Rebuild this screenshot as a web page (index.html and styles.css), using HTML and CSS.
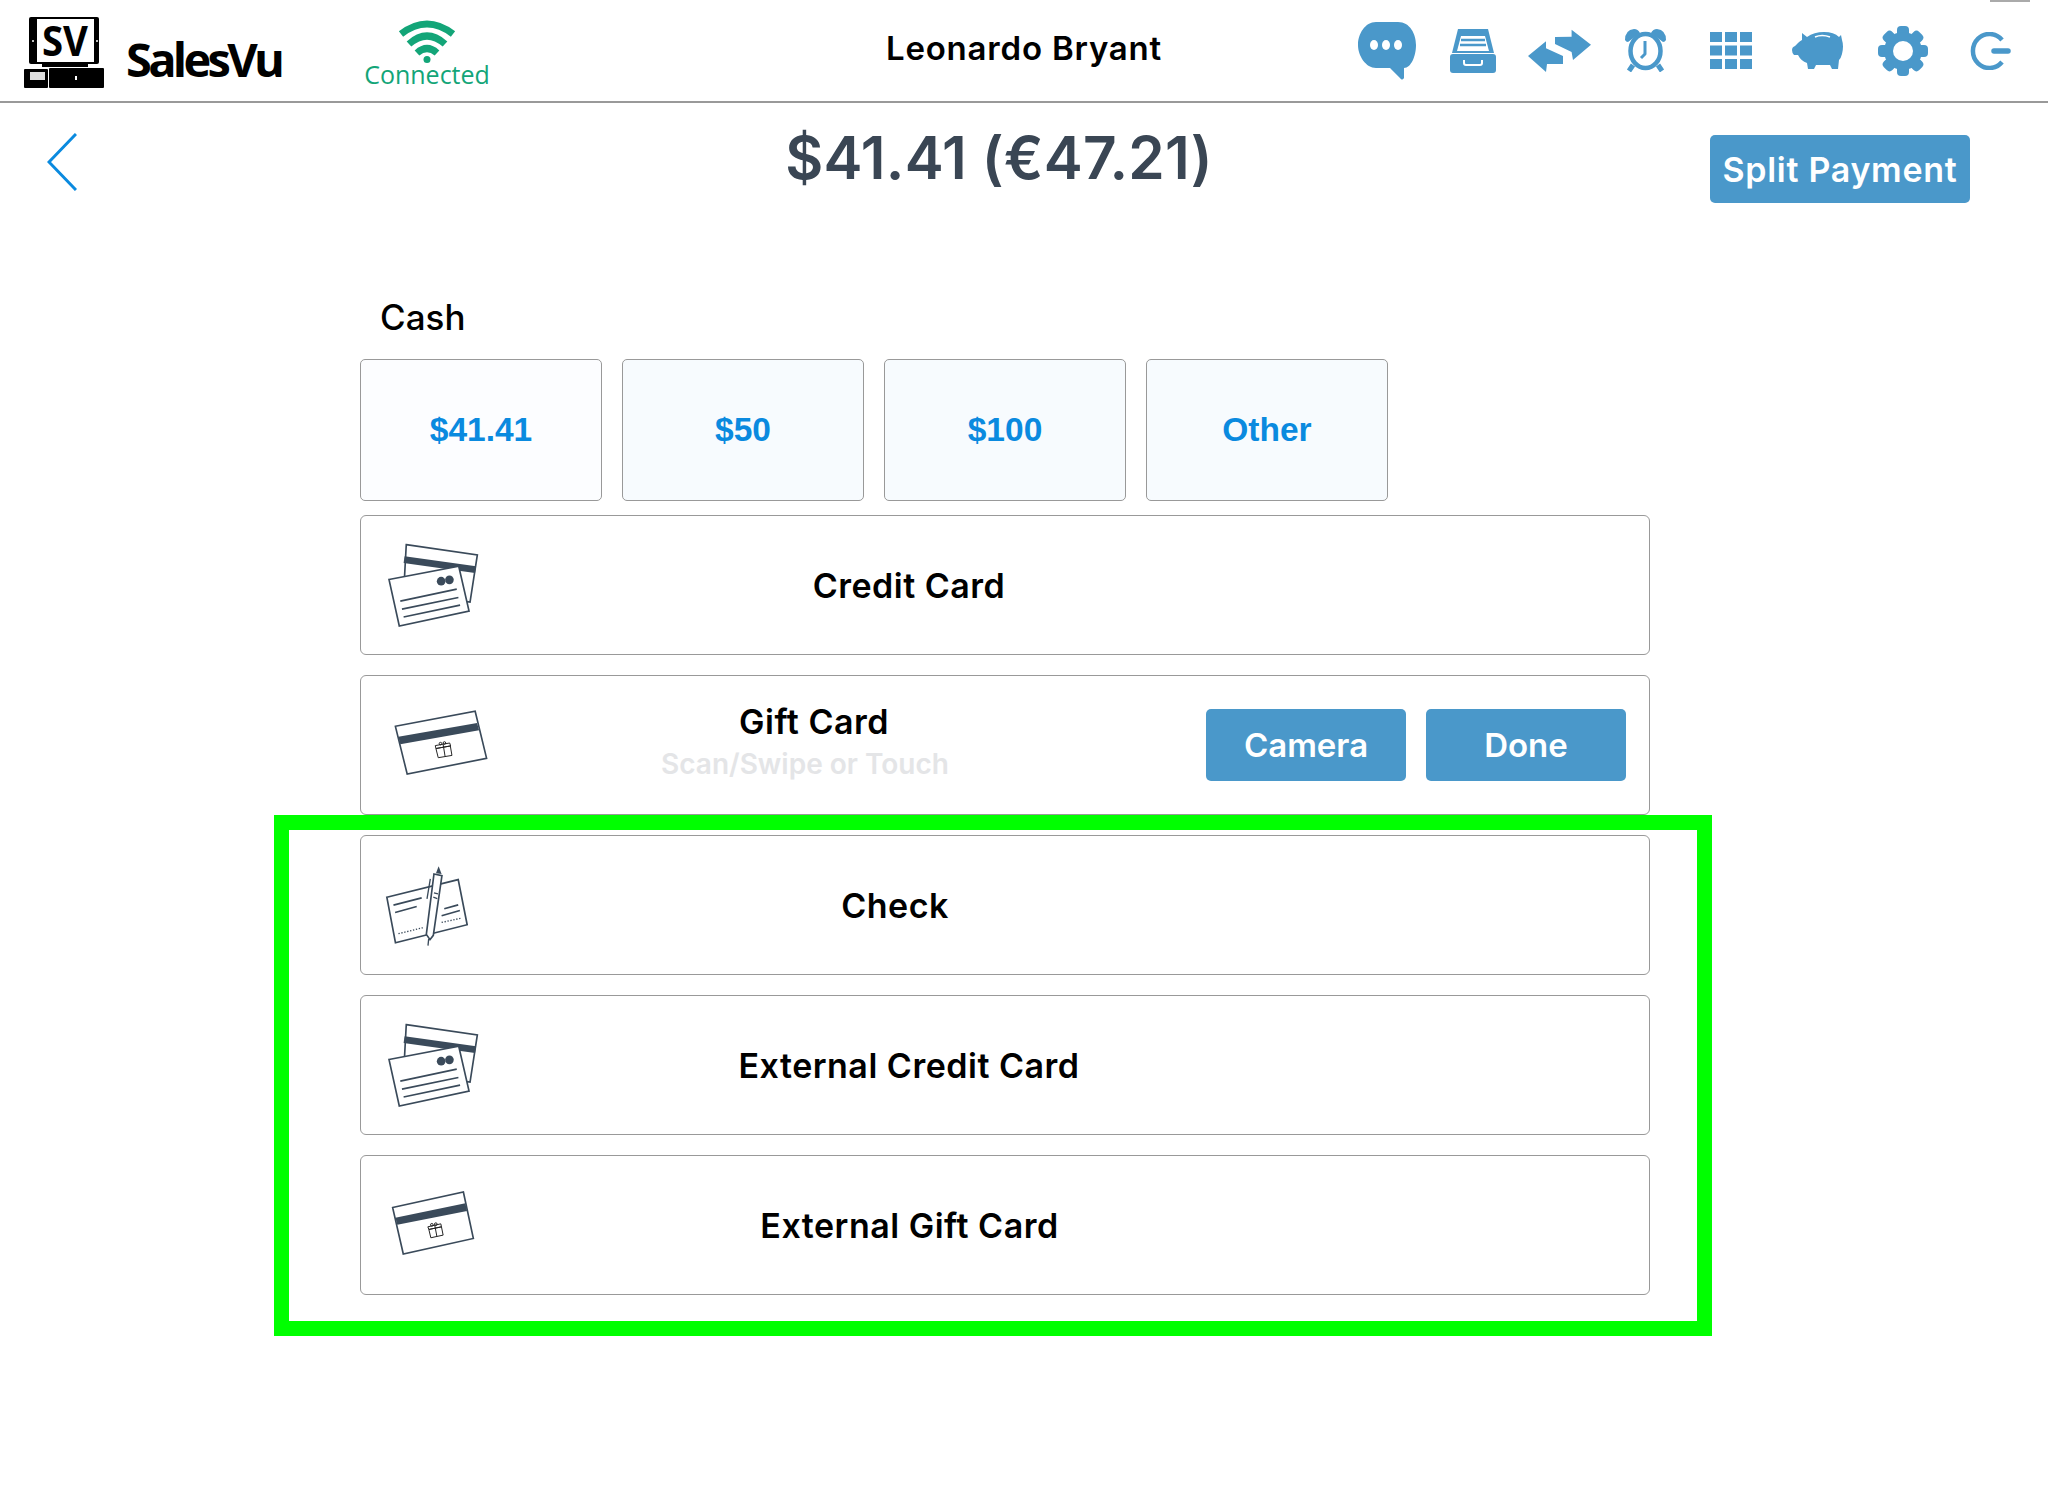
FILE: index.html
```html
<!DOCTYPE html>
<html lang="en">
<head>
<meta charset="utf-8">
<title>SalesVu Payment</title>
<link rel="stylesheet" href="styles.css">
</head>
<body>
<svg class="defs" width="0" height="0" aria-hidden="true">
  <symbol id="i-credit" viewBox="110 125 280 260">
    <polygon points="168,132 382,163 360,305 160,280" class="c-line"/>
    <polygon points="163,167 378,197 375,217 160,187" class="c-fill"/>
    <polygon points="116,237 326,197 357,332 147,377" class="c-line"/>
    <circle cx="273" cy="242" r="13" class="c-fill"/>
    <circle cx="298" cy="238" r="13" class="c-fill"/>
    <path d="M150 302 320 266M155 326 325 291M160 350 330 314" class="c-stroke"/>
  </symbol>
  <symbol id="i-gift" viewBox="125 625 293 205">
    <polygon points="132,678 376,632 411,776 168,824" class="c-line"/>
    <polygon points="141,710 382,668 388,690 147,733" class="c-fill"/>
    <g class="c-thin">
      <path d="M256 746 300 738 305 767 263 774Z"/>
      <path d="M254 737 298 729 301 738 256 746Z"/>
      <path d="M278 733 284 770"/>
      <circle cx="270" cy="731" r="4"/>
      <circle cx="282" cy="729" r="4"/>
    </g>
  </symbol>
  <symbol id="i-gift-small" viewBox="122 568 253 197">
    <polygon points="127,620 340,573 370,713 159,760" class="c-line"/>
    <polygon points="135,651 346,607 351,630 141,672" class="c-fill"/>
    <g class="c-thin">
      <path d="M236 686 274 678 279 703 242 711Z"/>
      <path d="M233 678 272 669 274 678 236 686Z"/>
      <path d="M254 674 260 706"/>
      <circle cx="245" cy="672" r="4"/>
      <circle cx="257" cy="670" r="4"/>
    </g>
  </symbol>
  <symbol id="i-check" viewBox="105 130 252 250">
    <polygon points="110,230 325,177 352,313 136,367" class="c-line"/>
    <path d="M130 254 215 232M135 276 200 258M283 265 325 253M275 286 330 270" class="c-stroke"/>
    <path d="M145 340 218 322M275 306 335 293" class="c-dots"/>
    <path d="M252 160 276 165 250 345 240 358 229 342Z" class="c-line"/>
    <path d="M258 158 266 137 275 160Z" class="c-fill"/>
    <path d="M241 175 231 235M252 217 264 220M250 230 262 234M236 356 234 376" class="c-pen"/>
  </symbol>
</svg>

<header class="topbar">
  <div class="brand">
    <svg class="logo" viewBox="24 10 80 78" width="80" height="78" aria-hidden="true">
      <rect x="29" y="17" width="70" height="47" rx="2" fill="#000"/>
      <rect x="37" y="19" width="57" height="43" fill="#fff"/>
      <text x="65" y="56" text-anchor="middle" textLength="46" lengthAdjust="spacingAndGlyphs" class="logo-sv">SV</text>
      <circle cx="33" cy="41" r="1" fill="#fff"/>
      <circle cx="97" cy="41" r="1" fill="#fff"/>
      <rect x="42" y="64" width="46" height="3" fill="#000"/>
      <rect x="24" y="69" width="24" height="19" rx="1" fill="#000"/>
      <rect x="49" y="68" width="55" height="20" rx="1" fill="#000"/>
      <rect x="30" y="72" width="15" height="8" fill="#ddd"/>
      <rect x="75" y="76" width="2" height="4" fill="#fff"/>
    </svg>
    <span class="brand-name">SalesVu</span>
  </div>
  <div class="status">
    <svg class="wifi" viewBox="0 0 58 43" width="58" height="43" aria-hidden="true">
      <path d="M3 14Q29 -6 55 14" class="wifi-arc"/>
      <path d="M11 24Q29 8 47 24" class="wifi-arc"/>
      <path d="M19 33Q29 24 39 33" class="wifi-arc"/>
      <circle cx="29" cy="39.500" r="3.500" fill="#13a578"/>
    </svg>
    <span class="status-text">Connected</span>
  </div>
  <div class="user">Leonardo Bryant</div>
  <nav class="tools">
    <span class="tool"><svg viewBox="0 0 58 58" width="58" height="58" aria-hidden="true"><path class="t" d="M18 0H40C52 0 58 12 58 23C58 34 53 46 46 46V56Q44 59 42 56L32 46H18C8 46 0 34 0 23C0 12 7 0 18 0Z"/><ellipse cx="16" cy="23" rx="4" ry="5" fill="#fff"/><ellipse cx="28" cy="23" rx="4" ry="5" fill="#fff"/><ellipse cx="40" cy="23" rx="4" ry="5" fill="#fff"/></svg></span>
    <span class="tool"><svg viewBox="0 0 46 44" width="46" height="44" aria-hidden="true"><path class="t" d="M8 0H38L44 24H2Z"/><path d="M11 7H35L39 22H7Z" fill="#fff"/><path d="M11 11H35M10 16H36" stroke="#4a98ca" stroke-width="2.500"/><rect class="t" x="0" y="25" width="46" height="19" rx="3"/><path d="M14 31V34Q14 36 16 36H30Q32 36 32 34V31" fill="none" stroke="#fff" stroke-width="2"/></svg></span>
    <span class="tool"><svg viewBox="0 0 63 43" width="63" height="43" aria-hidden="true"><path class="t" d="M27 8 43.600 7.700V.7L63 15.700 45 31 43.600 23 27 15Z"/><path class="t" d="M0 27 18 12.300V19.300L35 27V35H19L18 43Z"/></svg></span>
    <span class="tool"><svg viewBox="0 0 43 43" width="43" height="43" aria-hidden="true"><ellipse cx="21.500" cy="22" rx="15" ry="17" fill="none" stroke="#4a98ca" stroke-width="4.500"/><path class="t" d="M1 11Q1 1 10 0Q14 0 16 4L4 13Q2 13 1 11ZM42 11Q42 1 33 0Q29 0 27 4L39 13Q41 13 42 11Z"/><path d="M21 12V25L17 29" fill="none" stroke="#4a98ca" stroke-width="3" stroke-linejoin="round"/><path d="M9 36 5 42M34 36 38 42" stroke="#4a98ca" stroke-width="5"/></svg></span>
    <span class="tool"><svg class="grid-icon" viewBox="0 0 42 37" width="42" height="37" aria-hidden="true">
      <rect class="t" x="0" y="0" width="12" height="10"/><rect class="t" x="15" y="0" width="12" height="10"/><rect class="t" x="30" y="0" width="12" height="10"/>
      <rect class="t" x="0" y="13.500" width="12" height="10"/><rect class="t" x="15" y="13.500" width="12" height="10"/><rect class="t" x="30" y="13.500" width="12" height="10"/>
      <rect class="t" x="0" y="27" width="12" height="10"/><rect class="t" x="15" y="27" width="12" height="10"/><rect class="t" x="30" y="27" width="12" height="10"/>
    </svg></span>
    <span class="tool"><svg viewBox="0 0 51 37" width="51" height="37" aria-hidden="true"><path class="t" d="M10 1 15 5Q22 0 32 0Q42 0 47 5L49 3 50 8Q52 14 50 22Q49 26 47 28L46 37H40L38 33H24L22 37H16L15 31Q9 29 6 23H2Q0 21 0 18Q0 15 3 14L6 11Q8 9 10 8Z"/><path d="M23 5Q30 2 38 5" fill="none" stroke="#fff" stroke-width="1.500"/></svg></span>
    <span class="tool"><svg viewBox="0 0 50 50" width="50" height="50" aria-hidden="true"><g class="t"><rect x="19" y="0" width="12" height="50" rx="4"/><rect x="19" y="0" width="12" height="50" rx="4" transform="rotate(45 25 25)"/><rect x="19" y="0" width="12" height="50" rx="4" transform="rotate(90 25 25)"/><rect x="19" y="0" width="12" height="50" rx="4" transform="rotate(135 25 25)"/><circle cx="25" cy="25" r="19"/></g><circle cx="25" cy="25" r="10" fill="#fff"/></svg></span>
    <span class="tool"><svg viewBox="0 0 44 38" width="44" height="38" aria-hidden="true"><path d="M35 8A16.500 17 0 1 0 35 30" fill="none" stroke="#4a98ca" stroke-width="4.500"/><path d="M27 19H41" stroke="#4a98ca" stroke-width="5.500" stroke-linecap="round"/></svg></span>
  </nav>
</header>
<div class="notch"></div>

<main>
  <section class="titlebar">
    <svg class="back" viewBox="0 0 30 58" width="30" height="58" aria-hidden="true"><path d="M29 1 2 29 29 57" fill="none" stroke="#0a8adf" stroke-width="3"/></svg>
    <h1 class="total">$41.41 (€47.21)</h1>
    <button class="btn btn-split">Split Payment</button>
  </section>

  <section class="payments">
    <div class="cash-label">Cash</div>
    <div class="cash-row">
      <button class="cash cash-first">$41.41</button>
      <button class="cash">$50</button>
      <button class="cash">$100</button>
      <button class="cash">Other</button>
    </div>

    <div class="row">
      <svg class="ico ico-credit" aria-hidden="true"><use href="#i-credit"/></svg>
      <div class="label label-credit">Credit Card</div>
    </div>

    <div class="row">
      <svg class="ico ico-gift" aria-hidden="true"><use href="#i-gift"/></svg>
      <div class="label label-gift">
        <div>Gift Card</div>
        <div class="hint">Scan/Swipe or Touch</div>
      </div>
      <div class="actions">
        <button class="btn btn-action">Camera</button>
        <button class="btn btn-action">Done</button>
      </div>
    </div>

    <div class="row">
      <svg class="ico ico-check" aria-hidden="true"><use href="#i-check"/></svg>
      <div class="label label-check">Check</div>
    </div>

    <div class="row">
      <svg class="ico ico-credit" aria-hidden="true"><use href="#i-credit"/></svg>
      <div class="label label-credit">External Credit Card</div>
    </div>

    <div class="row">
      <svg class="ico ico-gift-small" aria-hidden="true"><use href="#i-gift-small"/></svg>
      <div class="label label-extgift">External Gift Card</div>
    </div>
  </section>
</main>
<div class="highlight"></div>
</body>
</html>
```

FILE: styles.css
```css
* { box-sizing: border-box; }
html, body { margin: 0; padding: 0; background: #fff; }
body { width: 2048px; height: 1505px; overflow: hidden; position: relative; font-family: "Inter", "Liberation Sans", sans-serif; color: #000; }
.defs { position: absolute; }

.c-line { fill: #fff; stroke: #3a4a5a; stroke-width: 5; }
.c-fill { fill: #3a4a5a; }
.c-stroke { fill: none; stroke: #3a4a5a; stroke-width: 5; }
.c-dots { fill: none; stroke: #3a4a5a; stroke-width: 4; stroke-dasharray: 4 5; }
.c-pen { fill: none; stroke: #3a4a5a; stroke-width: 4; }
.c-thin { fill: none; stroke: #222; stroke-width: 3; }

.topbar { height: 103px; border-bottom: 2px solid #999; display: flex; align-items: stretch; }
.brand { width: 326px; padding: 10px 0 0 24px; display: flex; align-items: flex-start; }
.logo { display: block; flex: none; }
.logo-sv { font-family: "Open Sans", sans-serif; font-weight: 700; font-size: 42px; fill: #000; }
.brand-name { font-family: "Open Sans", sans-serif; font-weight: 700; font-size: 47px; line-height: 60px; margin: 19px 0 0 22px; letter-spacing: -3.700px; }
.status { width: 200px; display: flex; flex-direction: column; align-items: center; padding-top: 20px; margin-left: 1px; }
.wifi { display: block; flex: none; }
.wifi-arc { fill: none; stroke: #13a578; stroke-width: 7; }
.status-text { font-family: "Open Sans", sans-serif; font-size: 25px; line-height: 25px; color: #13a578; margin-top: -1px; }
.user { width: 817px; padding-left: 177px; text-align: center; font-weight: 600; font-size: 33px; line-height: 96px; letter-spacing: .8px; }
.tools { display: flex; align-items: center; height: 101px; }
.tool { width: 86px; display: flex; justify-content: center; align-items: center; }
.tool svg { display: block; }
.t { fill: #4a98ca; }
.notch { position: absolute; top: 0; left: 1990px; width: 40px; height: 2px; background: #aaa; }

.titlebar { display: grid; grid-template-columns: 1fr auto 1fr; width: 1998px; align-items: start; padding-top: 30px; height: 257px; }
.back { margin-left: 47px; display: block; }
.total { margin: 0; font-size: 58.500px; font-weight: 600; line-height: 50px; color: #3a4654; letter-spacing: .2px; }
.btn { border: 0; border-radius: 5px; background: #4a98ca; color: #fff; font-family: inherit; font-weight: 600; padding: 0; }
.btn-split { justify-self: end; margin: 2px 28px 0 0; width: 260px; height: 68px; font-size: 34px; letter-spacing: .7px; }

.payments { margin-left: 360px; width: 1290px; display: flex; flex-direction: column; }
.cash-label { font-size: 35px; font-weight: 500; line-height: 40px; padding-left: 20px; height: 40px; margin-top: -63px; margin-bottom: 22px; }
.cash-row { display: flex; gap: 20px; margin-bottom: 14px; }
.cash { width: 242px; height: 142px; border: 1px solid #999; border-radius: 5px; background: #f7fbfe; color: #0a8adf; font-family: "Liberation Sans", sans-serif; font-weight: 700; font-size: 33.500px; padding: 0; }
.cash-first { background: #fcfdff; }

.row { height: 140px; border: 1px solid #999; border-radius: 6px; margin-bottom: 20px; display: flex; align-items: center; background: #fff; }
.ico { display: block; flex: none; }
.ico-credit { width: 93px; height: 87px; margin: 0 39px 0 26px; }
.ico-gift { width: 96px; height: 67px; margin: -6px 30px 0 32px; }
.ico-check { width: 84px; height: 83px; margin: 0 48px 0 24px; }
.ico-gift-small { width: 84px; height: 66px; margin: -5px 46px 0 30px; }
.label { font-weight: 600; font-size: 34px; text-align: center; letter-spacing: .5px; flex: none; }
.label-credit { width: 780px; }
.label-extgift { width: 777px; }
.label-check { width: 756px; }
.label-gift { width: 590px; margin-top: -5px; line-height: 43px; }
.hint { color: #e4e5e7; font-size: 28px; padding-right: 18px; line-height: 42px; letter-spacing: 0; }
.actions { margin-left: auto; display: flex; gap: 20px; padding-right: 23px; margin-top: -1px; }
.btn-action { width: 200px; height: 72px; font-size: 33px; }

.highlight { position: absolute; left: 274px; top: 815px; width: 1438px; height: 521px; border: 15px solid #00ff00; pointer-events: none; }
```
